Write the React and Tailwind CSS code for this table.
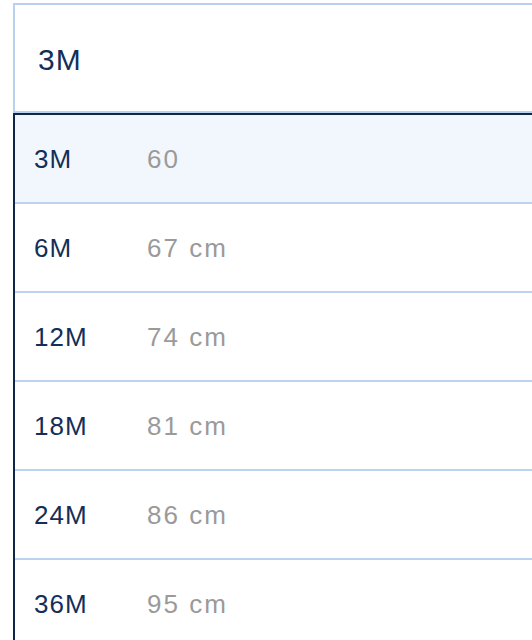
import React from 'react';

const sizes = [
  { label: '3M', value: '60', active: true },
  { label: '6M', value: '67 cm' },
  { label: '12M', value: '74 cm' },
  { label: '18M', value: '81 cm' },
  { label: '24M', value: '86 cm' },
  { label: '36M', value: '95 cm' },
];

const App = () => {
  return (
    <div className="w-[532px] h-[640px] overflow-hidden bg-white pt-[3px] pl-[13px]" style={{ fontFamily: '"Liberation Sans", Arial, sans-serif' }}>
      <div className="w-[560px]">
        {/* Select */}
        <div className="h-[110px] border-2 border-[#b9d1ee] flex items-center pl-[23px] pt-[2px]">
          <span className="text-[30px] text-[#132f59] tracking-[1px]">3M</span>
        </div>

        {/* Options */}
        <div className="border-l-2 border-t-2 border-[#0f2648]">
          {sizes.map((s) => (
            <div
              key={s.label}
              className={`h-[89px] border-b-2 border-[#bcd3ef] flex items-center pl-[19px] pt-[2px] ${s.active ? 'bg-[#f2f7fd]' : 'bg-white'}`}
            >
              <span className="w-[113px] text-[26px] text-[#132f59] tracking-[1px]">{s.label}</span>
              <span className="text-[26px] text-[#9a9a9a] tracking-[2px]">{s.value}</span>
            </div>
          ))}
        </div>
      </div>
    </div>
  );
};

export default App;
